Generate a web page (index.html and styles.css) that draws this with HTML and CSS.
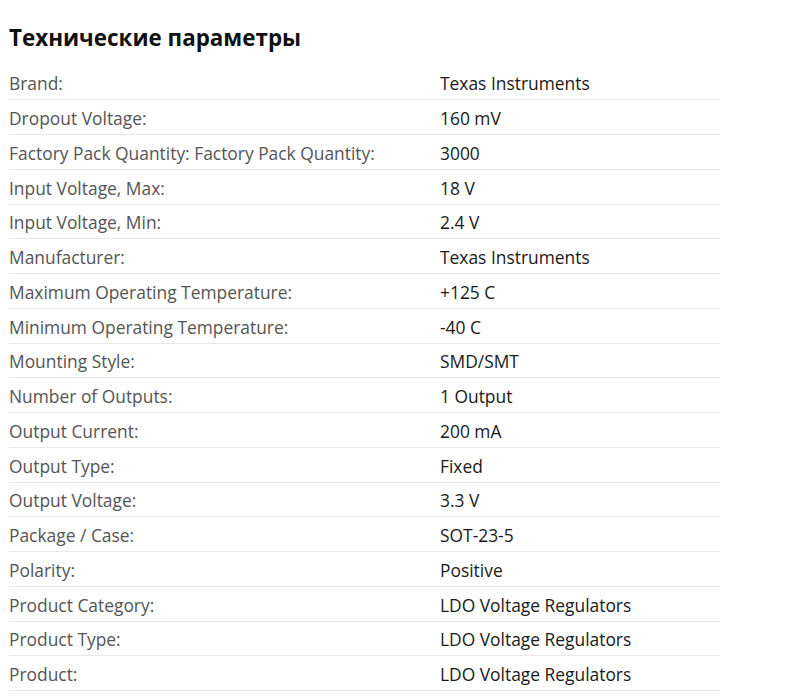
FILE: index.html
```html
<!DOCTYPE html>
<html lang="ru">
<head>
<meta charset="utf-8">
<title>Технические параметры</title>
<link rel="stylesheet" href="styles.css">
</head>
<body>
<section class="specs">
  <h2 class="specs-title">Технические параметры</h2>
  <div class="specs-table">
    <div class="row"><div class="label">Brand:</div><div class="value">Texas Instruments</div></div>
    <div class="row"><div class="label">Dropout Voltage:</div><div class="value">160 mV</div></div>
    <div class="row"><div class="label">Factory Pack Quantity: Factory Pack Quantity:</div><div class="value">3000</div></div>
    <div class="row"><div class="label">Input Voltage, Max:</div><div class="value">18 V</div></div>
    <div class="row"><div class="label">Input Voltage, Min:</div><div class="value">2.4 V</div></div>
    <div class="row"><div class="label">Manufacturer:</div><div class="value">Texas Instruments</div></div>
    <div class="row"><div class="label">Maximum Operating Temperature:</div><div class="value">+125 C</div></div>
    <div class="row"><div class="label">Minimum Operating Temperature:</div><div class="value">-40 C</div></div>
    <div class="row"><div class="label">Mounting Style:</div><div class="value">SMD/SMT</div></div>
    <div class="row"><div class="label">Number of Outputs:</div><div class="value">1 Output</div></div>
    <div class="row"><div class="label">Output Current:</div><div class="value">200 mA</div></div>
    <div class="row"><div class="label">Output Type:</div><div class="value">Fixed</div></div>
    <div class="row"><div class="label">Output Voltage:</div><div class="value">3.3 V</div></div>
    <div class="row"><div class="label">Package / Case:</div><div class="value">SOT-23-5</div></div>
    <div class="row"><div class="label">Polarity:</div><div class="value">Positive</div></div>
    <div class="row"><div class="label">Product Category:</div><div class="value">LDO Voltage Regulators</div></div>
    <div class="row"><div class="label">Product Type:</div><div class="value">LDO Voltage Regulators</div></div>
    <div class="row"><div class="label">Product:</div><div class="value">LDO Voltage Regulators</div></div>
  </div>
</section>
</body>
</html>
```
FILE: styles.css
```css
html, body {
  margin: 0;
  padding: 0;
  background: #fff;
}
body {
  font-family: "Open Sans", "Liberation Sans", sans-serif;
  padding: 0 0 0 9px;
}
.specs {
  width: 711px;
}
.specs-title {
  margin: 0;
  padding: 22.5px 0 13px;
  font-size: 22.4px;
  font-weight: 700;
  line-height: 30px;
  color: #111;
}
.specs-table {
  display: flex;
  flex-direction: column;
}
.row {
  display: grid;
  grid-template-columns: 431px 1fr;
  padding: 5.88px 0 3.88px;
  line-height: 24px;
  font-size: 17.4px;
  border-bottom: 1px solid #e8e8e8;
}
.label {
  color: #555;
}
.value {
  color: #1a1a1a;
}
```
